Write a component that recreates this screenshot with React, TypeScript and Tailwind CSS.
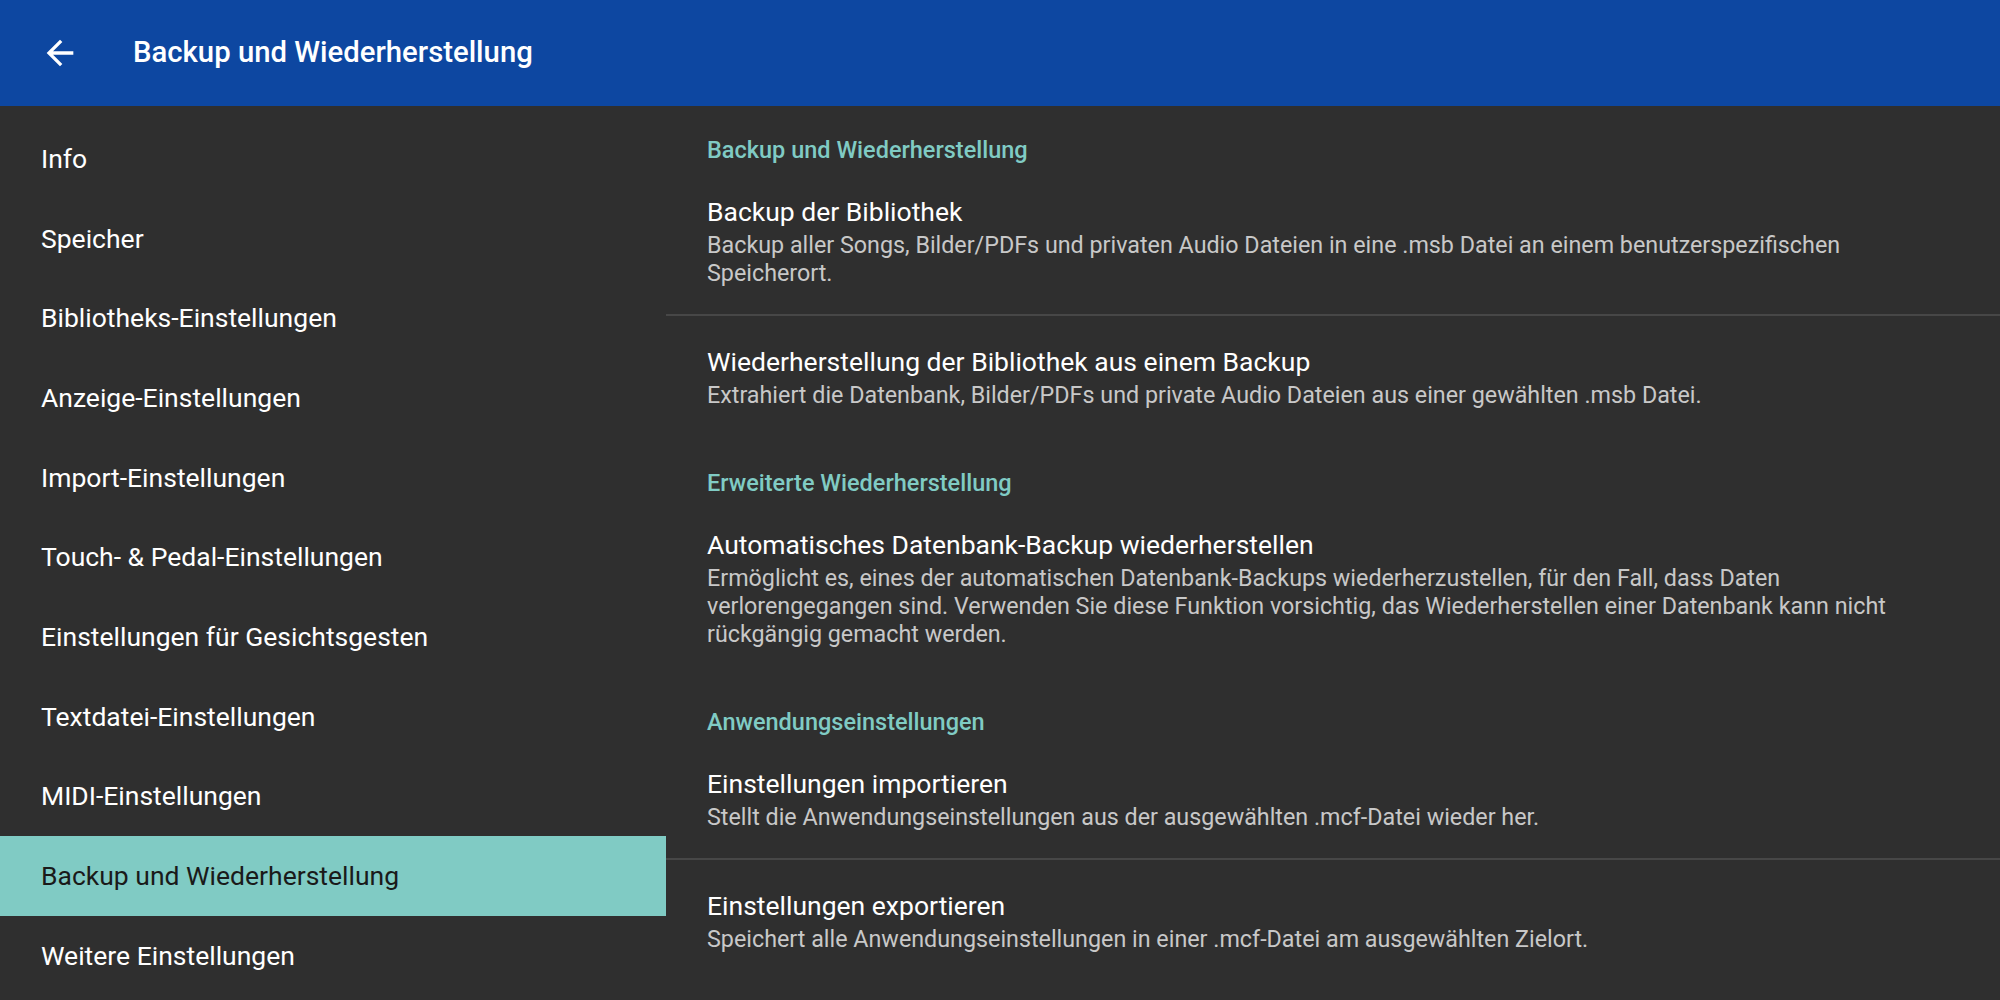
import React from "react";

const NAV_ITEMS = [
  "Info",
  "Speicher",
  "Bibliotheks-Einstellungen",
  "Anzeige-Einstellungen",
  "Import-Einstellungen",
  "Touch- & Pedal-Einstellungen",
  "Einstellungen für Gesichtsgesten",
  "Textdatei-Einstellungen",
  "MIDI-Einstellungen",
  "Backup und Wiederherstellung",
  "Weitere Einstellungen",
];

type Pref = { title: string; summary: string };

function SectionHeader({ first, children }: { first?: boolean; children: React.ReactNode }) {
  return (
    <div
      className={`pl-[41px] ${
        first ? "pt-[28px]" : "pt-[31px]"
      } text-[23.5px] leading-[32px] font-medium text-[#80cbc4]`}
    >
      {children}
    </div>
  );
}

function PrefItem({ item }: { item: Pref }) {
  return (
    <div className="pl-[41px] pr-[60px] pt-[26px] pb-[27px]">
      <div className="text-[26.5px] leading-[39px] text-white">{item.title}</div>
      <div className="text-[23.3px] leading-[28px] text-[#c8c8c8]">{item.summary}</div>
    </div>
  );
}

export default function App() {
  return (
    <div
      className="w-[2000px] h-[1000px] bg-[#2f2f2f] overflow-hidden flex flex-col"
      style={{ fontFamily: "Roboto, 'Noto Sans', sans-serif" }}
    >
      {/* Toolbar */}
      <div className="h-[106px] shrink-0 bg-[#0d47a1] flex items-center">
        <div className="w-[133px] flex justify-center pr-[13px]">
          <svg width="40" height="40" viewBox="0 0 24 24" fill="white">
            <path d="M20 11H7.83l5.59-5.59L12 4l-8 8 8 8 1.41-1.41L7.83 13H20v-2z" />
          </svg>
        </div>
        <div className="text-[29.3px] font-medium text-white">Backup und Wiederherstellung</div>
      </div>

      <div className="flex flex-1 min-h-0">
        {/* Sidebar */}
        <div className="w-[666px] shrink-0 pt-[13px]">
          {NAV_ITEMS.map((n) => {
            const active = n === "Backup und Wiederherstellung";
            return (
              <div
                key={n}
                className={`h-[79.7px] flex items-center pl-[41px] text-[26.5px] ${
                  active ? "bg-[#80cbc4] text-[#1a1a1a]" : "text-white"
                }`}
              >
                {n}
              </div>
            );
          })}
        </div>

        {/* Content */}
        <div className="flex-1">
          <SectionHeader first>Backup und Wiederherstellung</SectionHeader>
          <PrefItem
            item={{
              title: "Backup der Bibliothek",
              summary:
                "Backup aller Songs, Bilder/PDFs und privaten Audio Dateien in eine .msb Datei an einem benutzerspezifischen Speicherort.",
            }}
          />
          <div className="h-[2px] bg-[#474747]" />
          <PrefItem
            item={{
              title: "Wiederherstellung der Bibliothek aus einem Backup",
              summary:
                "Extrahiert die Datenbank, Bilder/PDFs und private Audio Dateien aus einer gewählten .msb Datei.",
            }}
          />
          <SectionHeader>Erweiterte Wiederherstellung</SectionHeader>
          <PrefItem
            item={{
              title: "Automatisches Datenbank-Backup wiederherstellen",
              summary:
                "Ermöglicht es, eines der automatischen Datenbank-Backups wiederherzustellen, für den Fall, dass Daten verlorengegangen sind. Verwenden Sie diese Funktion vorsichtig, das Wiederherstellen einer Datenbank kann nicht rückgängig gemacht werden.",
            }}
          />
          <SectionHeader>Anwendungseinstellungen</SectionHeader>
          <PrefItem
            item={{
              title: "Einstellungen importieren",
              summary: "Stellt die Anwendungseinstellungen aus der ausgewählten .mcf-Datei wieder her.",
            }}
          />
          <div className="h-[2px] bg-[#474747]" />
          <PrefItem
            item={{
              title: "Einstellungen exportieren",
              summary:
                "Speichert alle Anwendungseinstellungen in einer .mcf-Datei am ausgewählten Zielort.",
            }}
          />
        </div>
      </div>
    </div>
  );
}
